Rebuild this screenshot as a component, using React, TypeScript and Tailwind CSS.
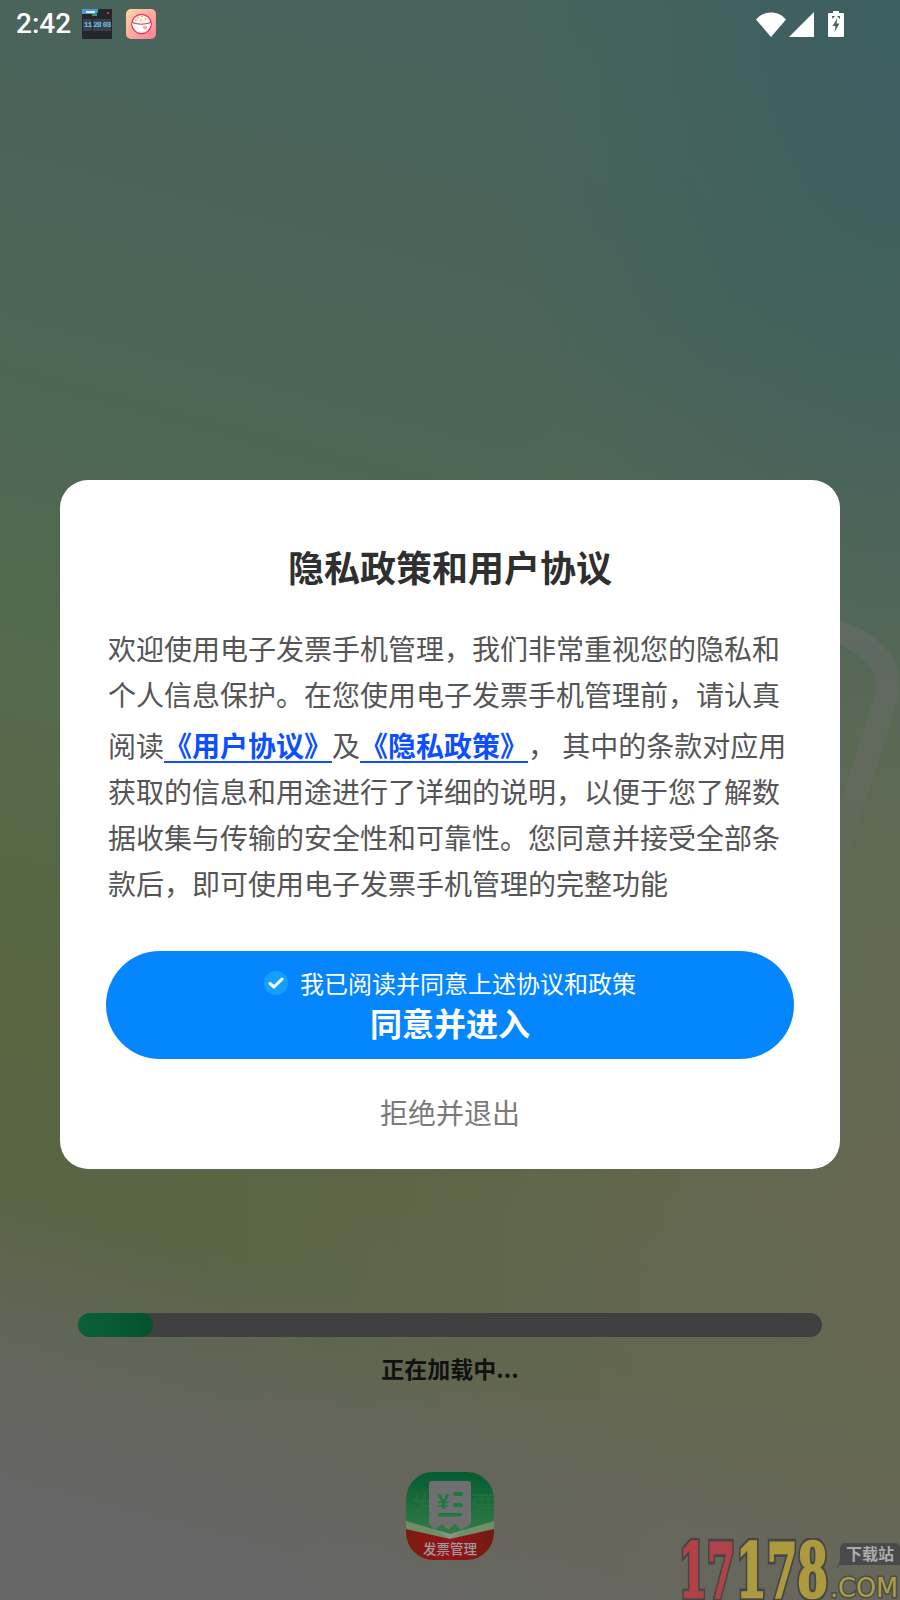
const CJK = '[font-family:"Noto_Sans_CJK_SC","Noto_Sans",sans-serif]'

function CalendarIcon() {
  return (
    <div className="relative h-[30px] w-[30px] bg-[#25262b]">
      <div className="absolute left-0 top-0 flex h-[5px] w-[16px] items-center justify-center rounded-br-[3px] bg-[#4a97dc]">
        <div className="h-[2px] w-[9px] bg-[#dcecff]" />
      </div>
      <div className="absolute left-[10px] top-[5px] h-[2px] w-[5px] bg-[#3f9a4a]" />
      <div className="absolute right-[3px] top-[3px] h-[2px] w-[2px] bg-[#e8352e]" />
      <div className="absolute left-0 top-[10px] flex w-full justify-between px-[1px]">
        {['11', '28', '03'].map((v) => (
          <span
            key={v}
            className="flex h-[12px] w-[9px] items-center justify-center bg-[#3c3f47] font-['Liberation_Mono',monospace] text-[8px] font-bold leading-none tracking-[-1px] text-[#62c0f2]"
          >
            {v}
          </span>
        ))}
      </div>
    </div>
  )
}

function RiceIcon() {
  return (
    <svg width="30" height="30" viewBox="0 0 30 30">
      <defs>
        <linearGradient id="rice" x1="0" y1="0" x2="1" y2="1">
          <stop offset="0" stopColor="#fdd7a8" />
          <stop offset="1" stopColor="#fe7f95" />
        </linearGradient>
      </defs>
      <rect width="30" height="30" rx="5" fill="url(#rice)" />
      <circle cx="15.500" cy="15" r="9.700" fill="#fdf3e6" stroke="#e8305f" strokeWidth="1.300" />
      <path d="M6 13.500q9.500 3 19 0l-.5 3a9.500 9 0 0 1-18 0z" fill="#fff" />
      <path d="M6 13.500q9.500 3.500 19 0" fill="none" stroke="#e8305f" strokeWidth="1.200" />
      <circle cx="12" cy="8.500" r="0.800" fill="#d9a05c" />
      <circle cx="16" cy="7.500" r="0.800" fill="#d9a05c" />
      <circle cx="19.500" cy="10" r="0.800" fill="#d9a05c" />
      <circle cx="10" cy="11" r="0.800" fill="#d9a05c" />
      <circle cx="15" cy="11" r="0.800" fill="#d9a05c" />
      <circle cx="19" cy="18.500" r="2" fill="#f7a3b4" />
    </svg>
  )
}

function StatusIcons() {
  return (
    <div className="flex items-center">
      <svg width="30" height="25" viewBox="0 0 30 25" fill="#fff">
        <path d="M0 7.500C4 3 9 .5 15 .5s11 2.500 15 7L15 25z" />
      </svg>
      <svg width="25" height="25" viewBox="0 0 25 25" fill="#fff" className="ml-[3px]">
        <path d="M25 0v25H0z" />
      </svg>
      <svg width="16" height="26" viewBox="0 0 16 26" className="ml-[14px]">
        <path d="M5 0h6v2h4a1 1 0 0 1 1 1v22a1 1 0 0 1-1 1H1a1 1 0 0 1-1-1V3a1 1 0 0 1 1-1h4z" fill="#fff" />
        <path d="M9.500 7 4.500 15h3l-1 6 5-8.500h-3z" fill="#46635f" />
        <path d="M4 5h3L4.500 8zM9 5h3v3z" fill="#46635f" />
      </svg>
    </div>
  )
}

function AppLogo() {
  return (
    <svg width="88" height="88" viewBox="0 0 88 88">
      <defs>
        <clipPath id="squircle">
          <rect width="88" height="88" rx="27" />
        </clipPath>
        <linearGradient id="green" x1="0" y1="0" x2="0" y2="1">
          <stop offset="0" stopColor="#055c31" />
          <stop offset="0.65" stopColor="#2f7a45" />
        </linearGradient>
        <linearGradient id="red" x1="0" y1="0" x2="1" y2="0">
          <stop offset="0" stopColor="#7a1c10" />
          <stop offset="0.5" stopColor="#97141a" />
          <stop offset="1" stopColor="#701c10" />
        </linearGradient>
      </defs>
      <g clipPath="url(#squircle)">
        <rect width="88" height="88" fill="url(#green)" />
        <text x="4" y="46" fontFamily="Noto Sans CJK SC, sans-serif" fontSize="30" fill="#2a7344" opacity="0.6">发</text>
        <text x="64" y="46" fontFamily="Noto Sans CJK SC, sans-serif" fontSize="30" fill="#2a7344" opacity="0.6">票</text>
        <path d="M0 49 44 62 88 49v39H0z" fill="#6f8f68" />
        <path d="M44 62 30 58 44 67 58 58z" fill="#8a8f88" />
        <path d="M0 57 44 67 88 57v31H0z" fill="url(#red)" />
      </g>
      <path d="M26 9h36a3 3 0 0 1 3 3v40l-10 6-6-6-7 6-6-6-7 6-6-6V12a3 3 0 0 1 3-3z" fill="#6f6f6f" />
      <text x="37" y="37" textAnchor="middle" fontFamily="Liberation Sans, sans-serif" fontWeight="700" fontSize="22" fill="#1c7a41">¥</text>
      <rect x="47" y="20" width="10" height="4" rx="2" fill="#1c7a41" />
      <rect x="47" y="31" width="10" height="4" rx="2" fill="#1c7a41" />
      <rect x="32" y="41" width="24" height="3.500" rx="1.700" fill="#1c7a41" />
      <text x="44" y="82" textAnchor="middle" fontFamily="Noto Sans CJK SC, sans-serif" fontWeight="500" fontSize="13.500" fill="#9c9c9c">发票管理</text>
    </svg>
  )
}

function Watermark() {
  return (
    <svg width="222" height="62" viewBox="0 0 222 62" className="absolute bottom-0 right-0">
      <g fontFamily="DejaVu Serif, serif" fontWeight="700" strokeLinejoin="miter" fontSize="74">
        <text x="1" y="59" fill="#474747" stroke="#474747" strokeWidth="8" textLength="56" lengthAdjust="spacingAndGlyphs">17</text>
        <text x="58" y="59" fill="#474747" stroke="#474747" strokeWidth="8" textLength="92" lengthAdjust="spacingAndGlyphs">178</text>
        <text x="1" y="59" fill="#b04349" stroke="#b04349" strokeWidth="2.500" textLength="56" lengthAdjust="spacingAndGlyphs">17</text>
        <text x="58" y="59" fill="#ad9a3f" stroke="#ad9a3f" strokeWidth="2.500" textLength="92" lengthAdjust="spacingAndGlyphs">178</text>
      </g>
      <text x="152" y="59" fontFamily="DejaVu Sans, sans-serif" fontSize="26" fill="#a8a040" stroke="#4c4c4c" strokeWidth="3" paintOrder="stroke" textLength="68" lengthAdjust="spacingAndGlyphs">.COM</text>
      <path d="M167 5h50a5 5 0 0 1 5 5v17h-60l-3 3 3-8V10a5 5 0 0 1 5-5z" fill="#4a4a4a" />
      <text x="192" y="22" textAnchor="middle" fontFamily="Noto Sans CJK SC, sans-serif" fontWeight="700" fontSize="16" fill="#ababab">下载站</text>
    </svg>
  )
}

export default function App() {
  return (
    <div className={`relative h-[1600px] w-[900px] overflow-hidden bg-[radial-gradient(ellipse_at_100%_0%,#3c5f60_0%,rgba(60,95,96,0)_32%),radial-gradient(ellipse_at_100%_76%,rgba(112,106,92,0.65)_0%,rgba(112,106,92,0)_55%),linear-gradient(195deg,#48645f_0%,#4a6459_20%,#4e6754_35%,#556a4c_50%,#586540_67%,#596545_78%,#62655a_86%,#666666_94%,#666666_100%)] ${CJK}`}>
      {/* faint logo stroke behind the dialog */}
      <svg width="100" height="300" viewBox="0 0 100 300" fill="none" className="absolute right-0 top-[600px]">
        <defs>
          <linearGradient id="swoosh" gradientUnits="userSpaceOnUse" x1="0" y1="0" x2="0" y2="290">
            <stop offset="0" stopColor="#6c6c6c" stopOpacity="0.55" />
            <stop offset="0.6" stopColor="#6c6c6c" stopOpacity="0.35" />
            <stop offset="1" stopColor="#6c6c6c" stopOpacity="0" />
          </linearGradient>
        </defs>
        <path d="M0 25C55 30 95 55 87 95L25 290" stroke="url(#swoosh)" strokeWidth="23" />
      </svg>

      <div className="relative flex h-[48px] items-center justify-between pl-[16px] pr-[56px]">
        <div className="flex items-center">
          <span className="font-['Roboto',sans-serif] text-[28px] font-medium leading-none text-white">2:42</span>
          <div className="ml-[11px]"><CalendarIcon /></div>
          <div className="ml-[14px]"><RiceIcon /></div>
        </div>
        <StatusIcons />
      </div>

      <div className="relative mx-[60px] mt-[432px] flex h-[689px] flex-col items-center rounded-[28px] bg-white px-[46px]">
        <h1 className="mt-[59px] text-[36px] font-bold leading-[54px] text-[#2f2f2f]">隐私政策和用户协议</h1>
        <p className="mt-[32px] w-[690px] self-start pl-[2px] text-[28px] leading-[46px] text-[#555555] [text-spacing-trim:space-all]">
          欢迎使用电子发票手机管理，我们非常重视您的隐私和个人信息保护。在您使用电子发票手机管理前，请认真阅读
          <span className="inline-block h-[40px] w-0" />
          <a className="font-bold text-[#0d4fff] underline underline-offset-[4px]">《用户协议》</a>
          及
          <a className="font-bold text-[#0d4fff] underline underline-offset-[4px]">《隐私政策》</a>
          ， 其中的条款对应用获取的信息和用途进行了详细的说明，以便于您了解数据收集与传输的安全性和可靠性。您同意并接受全部条款后，即可使用电子发票手机管理的完整功能
        </p>
        <button className="mt-[45px] flex h-[108px] w-[688px] shrink-0 flex-col items-center justify-center rounded-full bg-[#0586ff] pb-[2px] text-white">
          <span className="flex items-center text-[24px] leading-[36px]">
            <span className="mr-[12px] flex h-[24px] w-[24px] items-center justify-center rounded-full bg-[#14a0ff]">
              <svg width="16" height="14" viewBox="0 0 16 14" fill="none">
                <path d="M2 7.500 6 11 14 3" stroke="#fff" strokeWidth="3" strokeLinecap="round" strokeLinejoin="round" />
              </svg>
            </span>
            我已阅读并同意上述协议和政策
          </span>
          <span className="text-[32px] font-bold leading-[42px]">同意并进入</span>
        </button>
        <span className="mt-[33px] text-[28px] leading-[40px] text-[#7a7a7a]">拒绝并退出</span>
      </div>

      <div className="relative mx-[78px] mt-[144px] h-[24px] overflow-hidden rounded-full bg-[#404040]">
        <div className="h-full w-[75px] rounded-full bg-[linear-gradient(90deg,#0b6136,#04512c)]" />
      </div>
      <div className="relative mt-[15px] text-center text-[23px] font-bold leading-[32px] text-[#111]">正在加载中...</div>
      <div className="relative mt-[88px] flex justify-center">
        <AppLogo />
      </div>

      <Watermark />
    </div>
  )
}
